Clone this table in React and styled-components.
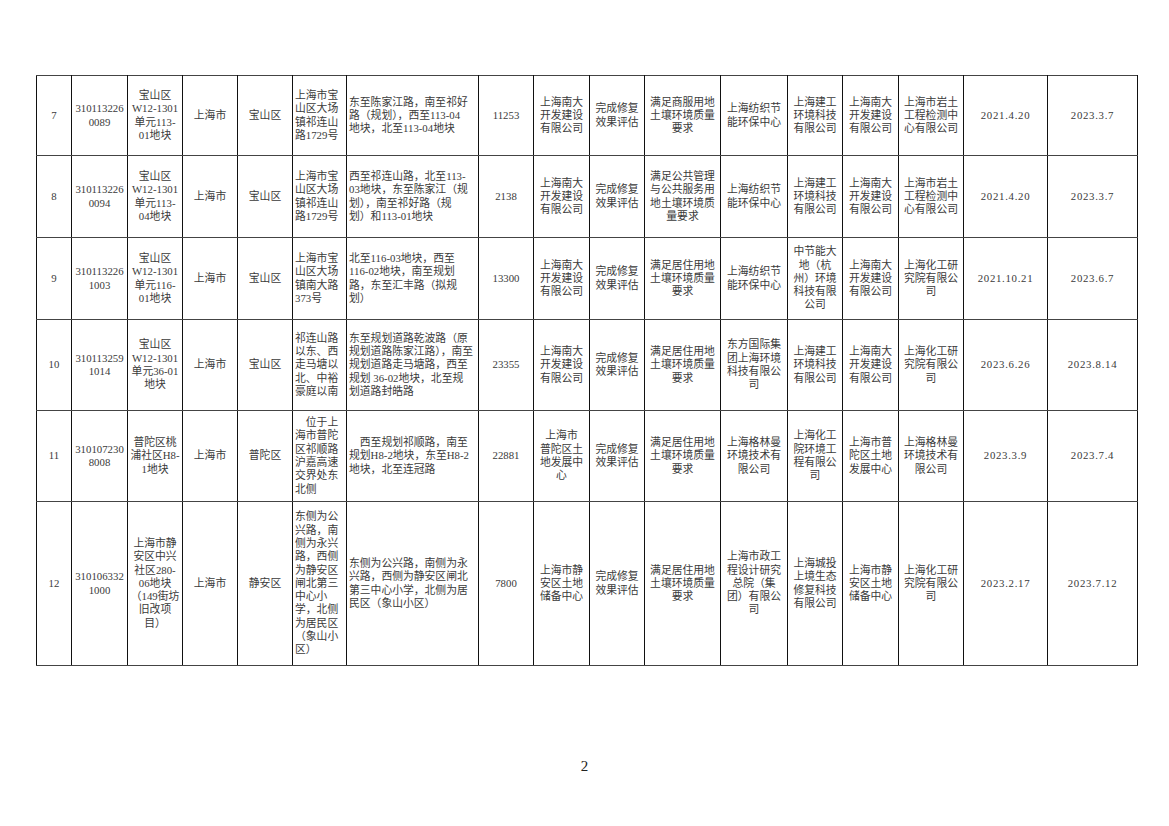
import React from "react";
import styled, { createGlobalStyle } from "styled-components";

// column widths, left to right (px)
const widths = [35, 56, 55, 55, 55, 54, 132, 55, 56, 55, 76, 67, 55, 56, 65, 84, 90];
// columns whose text sits to the left
const leftCols = [5, 6];

const rows = [
  {
    height: 80,
    cells: [
      "7",
      "310113226\n0089",
      "宝山区\nW12-1301\n单元113-\n01地块",
      "上海市",
      "宝山区",
      "上海市宝\n山区大场\n镇祁连山\n路1729号",
      "东至陈家江路，南至祁好\n路（规划），西至113-04\n地块，北至113-04地块",
      "11253",
      "上海南大\n开发建设\n有限公司",
      "完成修复\n效果评估",
      "满足商服用地\n土壤环境质量\n要求",
      "上海纺织节\n能环保中心",
      "上海建工\n环境科技\n有限公司",
      "上海南大\n开发建设\n有限公司",
      "上海市岩土\n工程检测中\n心有限公司",
      "2021.4.20",
      "2023.3.7",
    ],
  },
  {
    height: 82,
    cells: [
      "8",
      "310113226\n0094",
      "宝山区\nW12-1301\n单元113-\n04地块",
      "上海市",
      "宝山区",
      "上海市宝\n山区大场\n镇祁连山\n路1729号",
      "西至祁连山路，北至113-\n03地块，东至陈家江（规\n划），南至祁好路（规\n划）和113-01地块",
      "2138",
      "上海南大\n开发建设\n有限公司",
      "完成修复\n效果评估",
      "满足公共管理\n与公共服务用\n地土壤环境质\n量要求",
      "上海纺织节\n能环保中心",
      "上海建工\n环境科技\n有限公司",
      "上海南大\n开发建设\n有限公司",
      "上海市岩土\n工程检测中\n心有限公司",
      "2021.4.20",
      "2023.3.7",
    ],
  },
  {
    height: 82,
    cells: [
      "9",
      "310113226\n1003",
      "宝山区\nW12-1301\n单元116-\n01地块",
      "上海市",
      "宝山区",
      "上海市宝\n山区大场\n镇南大路\n373号",
      "北至116-03地块，西至\n116-02地块，南至规划\n路，东至汇丰路（拟规\n划）",
      "13300",
      "上海南大\n开发建设\n有限公司",
      "完成修复\n效果评估",
      "满足居住用地\n土壤环境质量\n要求",
      "上海纺织节\n能环保中心",
      "中节能大\n地（杭\n州）环境\n科技有限\n公司",
      "上海南大\n开发建设\n有限公司",
      "上海化工研\n究院有限公\n司",
      "2021.10.21",
      "2023.6.7",
    ],
  },
  {
    height: 91,
    cells: [
      "10",
      "310113259\n1014",
      "宝山区\nW12-1301\n单元36-01\n地块",
      "上海市",
      "宝山区",
      "祁连山路\n以东、西\n走马塘以\n北、中裕\n豪庭以南",
      "东至规划道路乾波路（原\n规划道路陈家江路），南至\n规划道路走马塘路，西至\n规划 36-02地块，北至规\n划道路封皓路",
      "23355",
      "上海南大\n开发建设\n有限公司",
      "完成修复\n效果评估",
      "满足居住用地\n土壤环境质量\n要求",
      "东方国际集\n团上海环境\n科技有限公\n司",
      "上海建工\n环境科技\n有限公司",
      "上海南大\n开发建设\n有限公司",
      "上海化工研\n究院有限公\n司",
      "2023.6.26",
      "2023.8.14",
    ],
  },
  {
    height: 91,
    indent: [5, 6],
    cells: [
      "11",
      "310107230\n8008",
      "普陀区桃\n浦社区H8-\n1地块",
      "上海市",
      "普陀区",
      "位于上\n海市普陀\n区祁顺路\n沪嘉高速\n交界处东\n北侧",
      "西至规划祁顺路，南至\n规划H8-2地块，东至H8-2\n地块，北至连冠路",
      "22881",
      "上海市\n普陀区土\n地发展中\n心",
      "完成修复\n效果评估",
      "满足居住用地\n土壤环境质量\n要求",
      "上海格林曼\n环境技术有\n限公司",
      "上海化工\n院环境工\n程有限公\n司",
      "上海市普\n陀区土地\n发展中心",
      "上海格林曼\n环境技术有\n限公司",
      "2023.3.9",
      "2023.7.4",
    ],
  },
  {
    height: 164,
    cells: [
      "12",
      "310106332\n1000",
      "上海市静\n安区中兴\n社区280-\n06地块\n（149街坊\n旧改项\n目）",
      "上海市",
      "静安区",
      "东侧为公\n兴路，南\n侧为永兴\n路，西侧\n为静安区\n闸北第三\n中心小\n学，北侧\n为居民区\n（象山小\n区）",
      "东侧为公兴路，南侧为永\n兴路，西侧为静安区闸北\n第三中心小学，北侧为居\n民区（象山小区）",
      "7800",
      "上海市静\n安区土地\n储备中心",
      "完成修复\n效果评估",
      "满足居住用地\n土壤环境质量\n要求",
      "上海市政工\n程设计研究\n总院（集\n团）有限公\n司",
      "上海城投\n上境生态\n修复科技\n有限公司",
      "上海市静\n安区土地\n储备中心",
      "上海化工研\n究院有限公\n司",
      "2023.2.17",
      "2023.7.12",
    ],
  },
];

const App = () => {
  return (
    <Page>
      <GlobalStyle />
      <Sheet>
        <colgroup>
          {widths.map((w, i) => (
            <col key={i} style={{ width: w }} />
          ))}
        </colgroup>
        <tbody>
          {rows.map((row, r) => (
            <Row key={r} $height={row.height}>
              {row.cells.map((text, c) => (
                <Cell
                  key={c}
                  $left={leftCols.includes(c)}
                  $indent={row.indent && row.indent.includes(c)}
                  $date={c >= 15}
                >
                  {text}
                </Cell>
              ))}
            </Row>
          ))}
        </tbody>
      </Sheet>
      <PageNumber>2</PageNumber>
    </Page>
  );
};

const GlobalStyle = createGlobalStyle`
  body {
    margin: 0;
    background: #fff;
  }
`;

const Page = styled.div`
  width: 1169px;
  height: 826px;
  box-sizing: border-box;
  padding: 75px 0 0 36px;
  background: #fff;
  font-family: "Liberation Serif", "Noto Sans CJK SC", serif;
  color: #3a3a3a;
`;

const Sheet = styled.table`
  width: 1101px;
  table-layout: fixed;
  border-collapse: collapse;
`;

const Row = styled.tr`
  height: ${(p) => p.$height}px;
`;

const Cell = styled.td`
  border-left: 1px solid #111;
  border-right: 1px solid #111;
  border-top: 1px solid #444;
  border-bottom: 1px solid #444;
  padding: 0 2px;
  font-size: 10.8px;
  line-height: 13.3px;
  white-space: pre;
  overflow: hidden;
  vertical-align: middle;
  text-align: ${(p) => (p.$left ? "left" : "center")};
  text-indent: ${(p) => (p.$indent ? "1em" : "0")};
  letter-spacing: ${(p) => (p.$date ? "0.7px" : "0")};
`;

const PageNumber = styled.div`
  margin: 92px 36px 0 0;
  text-align: center;
  font-size: 15px;
  color: #222;
`;

export default App;
